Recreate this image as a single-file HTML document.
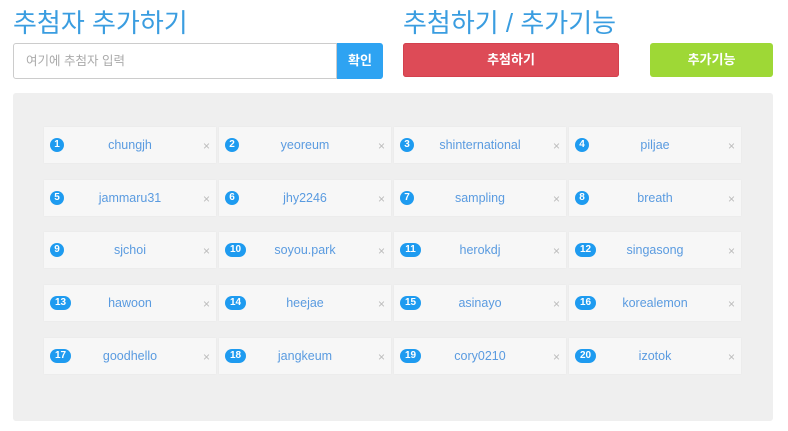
<!DOCTYPE html><html><head><meta charset="utf-8"><style>
body{margin:0;width:788px;height:431px;background:#fff;font-family:"Liberation Sans","Noto Sans CJK KR",sans-serif;position:relative;overflow:hidden}
.a{position:absolute}
h1{position:absolute;margin:0;font-weight:normal;font-size:26px;color:#3a9de0;top:6px;line-height:34px}
.in{left:13px;top:43px;width:322px;height:34px;border:1px solid #ccc;border-radius:3px 0 0 3px;font-size:12.5px;color:#aaa;line-height:34px;text-indent:12px}
.ok{left:337px;top:43px;width:46px;height:36px;background:#2ea3f2;border-radius:0 3px 3px 0;color:#fff;font-size:13px;font-weight:bold;text-align:center;line-height:36px}
.btn{top:43px;height:34px;border-radius:3px;color:#fff;font-size:13px;font-weight:bold;text-align:center;line-height:34px}
.panel{left:13px;top:93px;width:760px;height:328px;background:#efefef;border-radius:3px}
.c{width:172px;height:36px;background:#f7f7f7;box-shadow:0 0 1px #e2e2e2}
.c .n{position:absolute;left:6px;top:11px;height:14px;min-width:14px;padding:0;border-radius:7px;background:#1e9bf0;color:#fff;font-size:10px;font-weight:bold;text-align:center;line-height:14px}
.c .n.w{width:21px}
.c .t{position:absolute;left:20px;right:20px;top:0;line-height:36px;text-align:center;font-size:12.5px;color:#5a9be0}
.c .x{position:absolute;right:6px;top:12px;font-size:12px;color:#bbb;line-height:14px}
</style></head><body>
<h1 style="left:13px">추첨자 추가하기</h1>
<h1 style="left:403px">추첨하기 / 추가기능</h1>
<div class="a in">여기에 추첨자 입력</div>
<div class="a ok">확인</div>
<div class="a btn" style="left:403px;width:216px;background:#dd4b57;box-shadow:inset 0 0 0 1px #d3414e">추첨하기</div>
<div class="a btn" style="left:650px;width:123px;background:#9ed836">추가기능</div>
<div class="a panel"></div>
<div id="g"></div>
<script>
var names=["chungjh","yeoreum","shinternational","piljae","jammaru31","jhy2246","sampling","breath","sjchoi","soyou.park","herokdj","singasong","hawoon","heejae","asinayo","korealemon","goodhello","jangkeum","cory0210","izotok"];
var ys=[127,180,232,285,338],xs=[44,219,394,569],h="";
for(var i=0;i<20;i++){var r=Math.floor(i/4),c=i%4,n=i+1;
h+='<div class="a c" style="left:'+xs[c]+'px;top:'+ys[r]+'px"><span class="n'+(n>9?' w':'')+'">'+n+'</span><span class="t">'+names[i]+'</span><span class="x">×</span></div>';}
document.getElementById("g").innerHTML=h;
</script>
</body></html>
